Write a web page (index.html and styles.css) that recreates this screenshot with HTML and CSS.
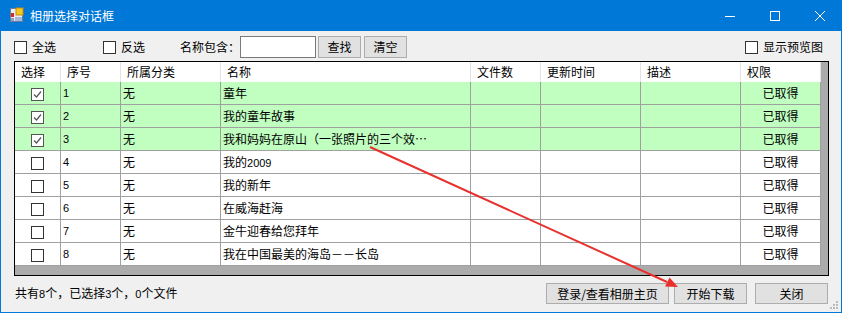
FILE: index.html
```html
<!DOCTYPE html>
<html lang="zh-CN">
<head>
    <meta charset="UTF-8">
    <title>相册选择对话框</title>
    <link rel="stylesheet" href="styles.css">
</head>
<body>
<div class="window">
    <div class="titlebar">
        <svg class="app-icon" width="16" height="16" viewBox="0 0 16 16">
            <rect x="1.5" y="1.5" width="12" height="13" fill="#e8eef6" stroke="#6c7f99"/>
            <rect x="7" y="1" width="7" height="7" fill="#f6c81e" stroke="#c98a10"/>
            <rect x="2" y="6" width="3" height="4" fill="#d8262a"/>
            <rect x="2" y="11" width="3" height="3" fill="#8aa0c8"/>
            <rect x="6" y="10" width="7" height="4" fill="#a8b8d8"/>
        </svg>
        <span class="title">相册选择对话框</span>
        <div class="caption-buttons">
            <span class="caption-btn"><svg width="10" height="10" viewBox="0 0 10 10"><path d="M0 5.5h10" stroke="#fff"/></svg></span>
            <span class="caption-btn"><svg width="10" height="10" viewBox="0 0 10 10"><rect x="0.5" y="0.5" width="9" height="9" fill="none" stroke="#fff"/></svg></span>
            <span class="caption-btn"><svg width="10" height="10" viewBox="0 0 10 10"><path d="M0 0L10 10M10 0L0 10" stroke="#fff"/></svg></span>
        </div>
    </div>

    <div class="content">
        <div class="toolbar">
            <label class="check check-all"><span class="box"></span>全选</label>
            <label class="check check-inverse"><span class="box"></span>反选</label>
            <span class="filter-label">名称包含：</span>
            <input class="filter-input" type="text">
            <button class="btn btn-find">查找</button>
            <button class="btn btn-clear">清空</button>
            <label class="check check-preview"><span class="box"></span>显示预览图</label>
        </div>

        <div class="grid">
            <table>
                <thead>
                    <tr>
                        <th class="col-select">选择</th>
                        <th class="col-no">序号</th>
                        <th class="col-cat">所属分类</th>
                        <th class="col-name">名称</th>
                        <th class="col-files">文件数</th>
                        <th class="col-time">更新时间</th>
                        <th class="col-desc">描述</th>
                        <th class="col-perm">权限</th>
                    </tr>
                </thead>
                <tbody>
                    <tr class="selected">
                        <td class="cell-check"><span class="box"><svg width="11" height="11" viewBox="0 0 11 11"><path d="M2 5.5L4.5 8L9 2.5" fill="none" stroke="#555" stroke-width="1.2"/></svg></span></td>
                        <td class="num">1</td><td>无</td><td>童年</td><td></td><td></td><td></td><td class="perm">已取得</td>
                    </tr>
                    <tr class="selected">
                        <td class="cell-check"><span class="box"><svg width="11" height="11" viewBox="0 0 11 11"><path d="M2 5.5L4.5 8L9 2.5" fill="none" stroke="#555" stroke-width="1.2"/></svg></span></td>
                        <td class="num">2</td><td>无</td><td>我的童年故事</td><td></td><td></td><td></td><td class="perm">已取得</td>
                    </tr>
                    <tr class="selected">
                        <td class="cell-check"><span class="box"><svg width="11" height="11" viewBox="0 0 11 11"><path d="M2 5.5L4.5 8L9 2.5" fill="none" stroke="#555" stroke-width="1.2"/></svg></span></td>
                        <td class="num">3</td><td>无</td><td>我和妈妈在原山（一张照片的三个效⋯</td><td></td><td></td><td></td><td class="perm">已取得</td>
                    </tr>
                    <tr>
                        <td class="cell-check"><span class="box"></span></td>
                        <td class="num">4</td><td>无</td><td>我的<span class="num">2009</span></td><td></td><td></td><td></td><td class="perm">已取得</td>
                    </tr>
                    <tr>
                        <td class="cell-check"><span class="box"></span></td>
                        <td class="num">5</td><td>无</td><td>我的新年</td><td></td><td></td><td></td><td class="perm">已取得</td>
                    </tr>
                    <tr>
                        <td class="cell-check"><span class="box"></span></td>
                        <td class="num">6</td><td>无</td><td>在威海赶海</td><td></td><td></td><td></td><td class="perm">已取得</td>
                    </tr>
                    <tr>
                        <td class="cell-check"><span class="box"></span></td>
                        <td class="num">7</td><td>无</td><td>金牛迎春给您拜年</td><td></td><td></td><td></td><td class="perm">已取得</td>
                    </tr>
                    <tr>
                        <td class="cell-check"><span class="box"></span></td>
                        <td class="num">8</td><td>无</td><td>我在中国最美的海岛－－长岛</td><td></td><td></td><td></td><td class="perm">已取得</td>
                    </tr>
                </tbody>
            </table>
        </div>

        <div class="footer">
            <span class="status">共有<span class="num">8</span>个，已选择<span class="num">3</span>个，<span class="num">0</span>个文件</span>
            <button class="btn btn-home">登录/查看相册主页</button>
            <button class="btn btn-start">开始下载</button>
            <button class="btn btn-close">关闭</button>
        </div>
    </div>

    <!-- annotation arrow drawn over the dialog -->
    <svg class="arrow" width="842" height="313" viewBox="0 0 842 313">
        <line x1="370" y1="147" x2="667" y2="282" stroke="#e8302c" stroke-width="2"/>
        <polygon points="678,287 665,286.5 669.5,277.5" fill="#e8302c"/>
    </svg>

    <svg class="grip" width="9" height="9" viewBox="0 0 9 9">
        <rect x="6" y="0" width="2" height="2" fill="#bcbcbc"/>
        <rect x="3" y="3" width="2" height="2" fill="#bcbcbc"/>
        <rect x="6" y="3" width="2" height="2" fill="#bcbcbc"/>
        <rect x="0" y="6" width="2" height="2" fill="#bcbcbc"/>
        <rect x="3" y="6" width="2" height="2" fill="#bcbcbc"/>
        <rect x="6" y="6" width="2" height="2" fill="#bcbcbc"/>
    </svg>
</div>
</body>
</html>
```

FILE: styles.css
```css
body {
    margin: 0;
    font-family: "Noto Sans CJK SC", sans-serif;
    font-size: 12px;
    line-height: 14px;
    color: #000;
    background: #fff;
}
.window {
    position: relative;
    width: 842px;
    height: 313px;
    box-sizing: border-box;
    border: 1px solid #0078d7;
    border-top: none;
    background: #f0f0f0;
}

/* title bar */
.titlebar {
    display: flex;
    align-items: center;
    height: 31px;
    margin: 0 -1px;
    background: #0078d7;
    color: #fff;
}
.app-icon {
    margin-left: 9px;
    margin-top: -1px;
}
.title {
    margin-left: 5px;
}
.caption-buttons {
    display: flex;
    margin-left: auto;
    margin-right: 0;
}
.caption-btn {
    display: flex;
    align-items: center;
    justify-content: center;
    width: 45px;
    height: 31px;
}

.content {
    padding: 5px 12px 0 13px;
}

/* toolbar */
.toolbar {
    display: flex;
    align-items: center;
    height: 22px;
}
.check {
    display: flex;
    align-items: center;
}
.box {
    display: inline-flex;
    align-items: center;
    justify-content: center;
    width: 13px;
    height: 13px;
    box-sizing: border-box;
    border: 1px solid #333;
    background: #fff;
}
.check .box {
    margin-right: 5px;
}
.check-all {
    width: 89px;
}
.check-inverse {
    width: 77px;
}
.filter-label {
    width: 60px;
}
.filter-input {
    width: 76px;
    height: 22px;
    box-sizing: border-box;
    margin: 0 2px 0 0;
    border: 1px solid #7a7a7a;
    background: #fff;
}
.btn {
    height: 22px;
    box-sizing: border-box;
    padding: 0;
    border: 1px solid #adadad;
    background: #e1e1e1;
    font: inherit;
    color: #000;
}
.btn-find {
    width: 43px;
}
.btn-clear {
    width: 43px;
    margin-left: 3px;
}
.check-preview {
    margin-left: auto;
    margin-right: 6px;
}

/* data grid */
.grid {
    width: 815px;
    height: 215px;
    box-sizing: border-box;
    margin-top: 3px;
    border: 1px solid #000;
    background: #ababab;
    overflow: hidden;
}
.grid table {
    width: 806px;
    border-collapse: separate;
    border-spacing: 0;
    table-layout: fixed;
}
.grid th {
    box-sizing: border-box;
    height: 20px;
    padding: 0 0 0 6px;
    border-right: 1px solid #e3e3e3;
    background: #fff;
    font-weight: normal;
    text-align: left;
}
.grid td {
    box-sizing: border-box;
    height: 23px;
    padding: 0 0 0 2px;
    border-right: 1px solid #a0a0a0;
    border-bottom: 1px solid #a0a0a0;
    background: #fff;
    white-space: nowrap;
    overflow: hidden;
}
.grid tr.selected td {
    background: #c0ffc0;
}
.col-select { width: 46px; }
.col-no { width: 60px; }
.col-cat { width: 100px; }
.col-name { width: 250px; }
.col-files { width: 70px; }
.col-time { width: 100px; }
.col-desc { width: 100px; }
.col-perm { width: 80px; }
.grid td.cell-check {
    padding: 0;
    text-align: center;
}
.cell-check .box {
    vertical-align: middle;
    border-color: #333;
}
.selected .cell-check .box {
    border-color: #555;
}
.grid td.perm {
    padding: 0;
    text-align: center;
}
.num {
    font-family: "Liberation Sans", sans-serif;
    font-size: 11px;
}

/* bottom bar */
.footer {
    display: flex;
    align-items: center;
    margin-top: 7px;
    padding-right: 1px;
}
.status {
    flex: 1;
    padding-left: 1px;
}
.footer .btn {
    height: 21px;
}
.btn-home {
    width: 123px;
}
.btn-start {
    width: 73px;
    margin-left: 5px;
}
.btn-close {
    width: 73px;
    margin-left: 8px;
}

.arrow {
    position: absolute;
    left: -1px;
    top: 0;
    pointer-events: none;
}
.grip {
    position: absolute;
    right: 2px;
    bottom: 2px;
}
```
